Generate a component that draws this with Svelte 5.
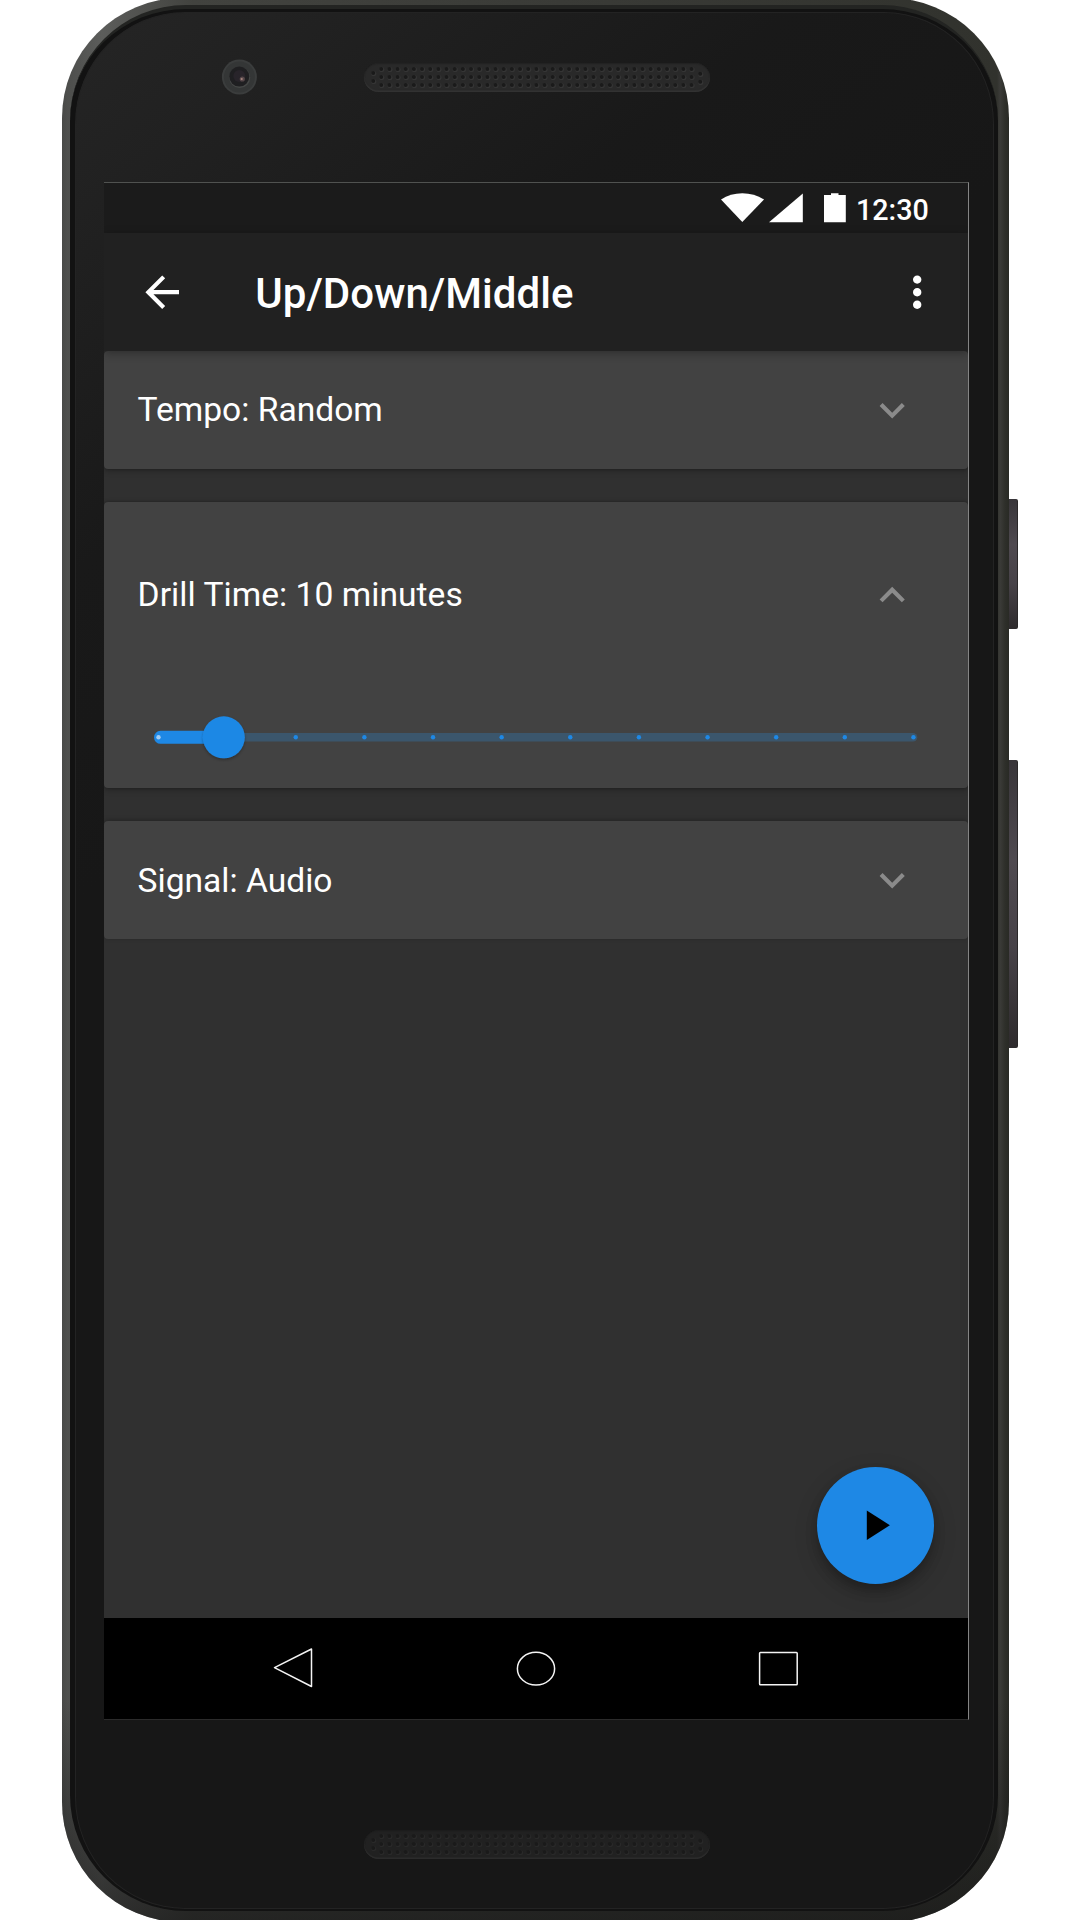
<script>
  const cards = [
    { label: 'Tempo: Random', open: false },
    { label: 'Drill Time: 10 minutes', open: true },
    { label: 'Signal: Audio', open: false }
  ];
  const ticks = Array.from({ length: 12 }, (_, i) => i);
  const holes = [];
  for (let c = 0; c < 39; c++) {
    for (let r = 0; r < 3; r++) holes.push([17.2 + c * 8.166, 5.9 + r * 8]);
  }
  holes.push([9.2, 9.9], [9.2, 17.9], [336.2, 10.8], [336.2, 18.8]);
</script>

{#snippet speaker(kind)}
  <div class="speaker {kind}">
    <svg width="346" height="29" viewBox="0 0 346 29">
      {#each holes as [x, y]}
        <circle class="rim" cx={x + 0.5} cy={y + 0.6} r="2.600" />
        <circle class="hole" cx={x} cy={y} r="2" />
      {/each}
    </svg>
  </div>
{/snippet}

<div class="stage">
  <div class="phone">
    <div class="metal"></div>
    <div class="rim-dark"></div>
    <div class="glass"></div>

    <div class="bezel top">
      <svg class="camera" width="36" height="36" viewBox="0 0 36 36">
        <circle cx="18.400" cy="18" r="17.500" fill="#3b3d3d" />
        <circle cx="18.400" cy="18" r="15.500" fill="#343636" />
        <circle cx="18.700" cy="18.500" r="10.500" fill="#464847" />
        <circle cx="18.300" cy="17.600" r="10" fill="#1f1f21" />
        <circle cx="18.300" cy="17" r="6" fill="#28242a" />
        <circle cx="21.300" cy="20" r="2.600" fill="#57484a" />
        <circle cx="20.700" cy="20" r="1.100" fill="#a98780" />
      </svg>
      {@render speaker('ear')}
    </div>

    <div class="screen">
      <div class="status">
        <svg width="126" height="31" viewBox="720 192 126 31" fill="#fff">
          <path d="M742.300 222 721 199.500Q730.500 193.200 742.300 193.200T764 199.500Z" />
          <path d="M769 222.300 802.800 193.500V222.300Z" />
          <path d="M824 195H831V193.200H838.500V195H845.800V222.300H824Z" />
        </svg>
        <span class="clock">12:30</span>
      </div>

      <header class="appbar">
        <svg class="icon" viewBox="0 0 24 24"><path d="M20 11H7.830l5.590-5.590L12 4l-8 8 8 8 1.410-1.410L7.830 13H20v-2z" /></svg>
        <h1>Up/Down/Middle</h1>
        <svg class="icon" viewBox="0 0 24 24"><path d="M12 8c1.100 0 2-.9 2-2s-.9-2-2-2-2 .9-2 2 .9 2 2 2zm0 2c-1.100 0-2 .9-2 2s.9 2 2 2 2-.9 2-2-.9-2-2-2zm0 6c-1.100 0-2 .9-2 2s.9 2 2 2 2-.9 2-2-.9-2-2-2z" /></svg>
      </header>

      <main>
        {#each cards as card}
          <section class="card" class:open={card.open}>
            <div class="head">
              <span>{card.label}</span>
              <svg class="icon" viewBox="0 0 24 24">
                {#if card.open}
                  <path d="M12 8l-6 6 1.410 1.410L12 10.830l4.590 4.580L18 14z" />
                {:else}
                  <path d="M16.590 8.590L12 13.170 7.410 8.590 6 10l6 6 6-6z" />
                {/if}
              </svg>
            </div>
            {#if card.open}
              <svg class="slider" width="764" height="50" viewBox="0 0 764 50">
                <defs>
                  <filter id="knob" x="-30%" y="-30%" width="160%" height="160%">
                    <feDropShadow dx="0" dy="1.500" stdDeviation="1.500" flood-color="#000" flood-opacity=".3" />
                  </filter>
                </defs>
                <rect x="2" y="21" width="761.300" height="8.600" rx="4.300" fill="#3b566c" />
                <rect x="0" y="18.800" width="70" height="13" rx="6.500" fill="#1e88e5" />
                {#each ticks as i}
                  <circle cx={4.5 + i * 68.63} cy="25.300" r="2.200" fill={i === 0 ? '#a3cdf3' : '#1e88e5'} />
                {/each}
                <circle cx="69.800" cy="25.300" r="21" fill="#1e88e5" filter="url(#knob)" />
              </svg>
            {/if}
          </section>
        {/each}
        <button class="fab" aria-label="Start">
          <svg class="icon" viewBox="0 0 24 24"><path d="M8 5v14l11-7z" /></svg>
        </button>
      </main>

      <nav>
        <svg width="40" height="42" viewBox="0 0 40 42"><path d="M1.500 20.700 38.500 2V39.500Z" /></svg>
        <svg width="40" height="42" viewBox="0 0 40 42"><ellipse cx="20" cy="21.700" rx="18.600" ry="16.400" /></svg>
        <svg width="40" height="42" viewBox="0 0 40 42"><rect x="1.600" y="5.500" width="37.600" height="32.300" rx=".8" /></svg>
      </nav>
    </div>

    <div class="bezel bottom">
      {@render speaker('mouth')}
    </div>
  </div>
  <div class="keys">
    <div class="key power"></div>
    <div class="key volume"></div>
  </div>
</div>

<style>
  :global(body) { background: #fff; overflow: hidden; }
  .stage {
    width: 1080px; height: 1920px; padding-left: 62px; box-sizing: border-box;
    display: flex; overflow: hidden; font-family: Roboto, sans-serif;
  }
  .phone {
    position: relative; width: 947px; height: 1920px; flex: none;
    display: flex; flex-direction: column; align-items: flex-start;
  }
  .metal, .rim-dark, .glass { position: absolute; }
  .metal {
    inset: -2px 0; border-radius: 120px;
    background: linear-gradient(90deg, #484947 0, #4d4e4c 5px, #5c5d5b 40px, #42433f 130px, #3a3b37 500px, #31322d 935px, #3b3b38 938px, #2e2f2a 943px, #292a25 947px);
  }
  .metal::after {
    content: ''; position: absolute; inset: 1702px 0 0; border-radius: 0 0 120px 120px;
    background: linear-gradient(180deg, transparent, rgba(20, 20, 20, .65));
  }
  .rim-dark { inset: 5px 11px 9px 7.500px; border-radius: 116px; background: #121212; border-top: 4px solid #232422; box-sizing: border-box; }
  .glass {
    inset: 11.500px 15px 11px 13px; border-radius: 110px / 112px;
    border: 1.500px solid #232323; box-sizing: border-box;
    background: linear-gradient(142deg, #252525 0, #212121 160px, #191919 440px, #171717 700px, #171717 100%);
  }
  .bezel { position: relative; width: 100%; flex: none; box-sizing: border-box; }
  .bezel.top { height: 182px; display: flex; align-items: flex-start; padding: 58.700px 0 0 159px; }
  .bezel.bottom { height: 200px; padding: 110px 0 0 302px; }
  .camera { display: block; flex: none; }
  .speaker { width: 346px; height: 29px; border-radius: 15px; flex: none; }
  .speaker svg { display: block; }
  .ear { margin: 4px 0 0 107px; background: #292929; box-shadow: inset 0 -1.500px 1px #333, inset 0 1px 1px #222; }
  .mouth { background: #212121; box-shadow: inset 0 -1.500px 1px #2d2d2d, inset 0 1px 1px #1c1c1c; }
  .rim { fill: #353535; }
  .hole { fill: #1a1a1a; }
  .mouth .rim { fill: #292929; }
  .mouth .hole { fill: #1a1a1a; }

  .screen {
    position: relative; margin-left: 42px; width: 865px; height: 1538px; flex: none; box-sizing: border-box;
    border-top: 1px solid #505250; border-right: 1px solid #858585; border-bottom: 1px solid #2b2b2b;
    display: flex; flex-direction: column; overflow: hidden; background: #303030; color: #fff;
  }
  .icon { width: 50.400px; height: 50.400px; flex: none; display: block; fill: currentColor; }
  .status { height: 49.700px; flex: none; background: #1b1b1b; display: flex; justify-content: flex-end; padding-right: 39px; box-sizing: border-box; }
  .status svg { margin: 9px 10px 0 0; flex: none; }
  .clock { font-size: 28.700px; font-weight: 500; line-height: 34px; padding-top: 9.500px; width: 73px; white-space: nowrap; }
  .appbar {
    position: relative; z-index: 2; height: 118.300px; flex: none; box-sizing: border-box; background: #212121;
    display: flex; align-items: center; padding: 0 25.400px 0 33.400px;
    box-shadow: 0 2px 9px rgba(0, 0, 0, .32);
  }
  h1 { margin: 0 0 0 67.500px; flex: 1; font-size: 42px; letter-spacing: .04px; line-height: 50px; font-weight: 500; white-space: nowrap; padding-top: 4px; }
  main { position: relative; flex: 1; display: flex; flex-direction: column; gap: 33.600px; }
  .card {
    height: 117.600px; flex: none; box-sizing: border-box; background: #424242; border-radius: 4px;
    box-shadow: 0 2px 6px rgba(0, 0, 0, .24), 0 0 3px rgba(0, 0, 0, .26);
  }
  .card:nth-of-type(3) { box-shadow: 0 -1px 5px rgba(0, 0, 0, .26); }
  .head { height: 100%; display: flex; align-items: center; justify-content: space-between; padding: 0 50.200px 0 33.600px; font-size: 33.600px; line-height: 40px; }
  .card:nth-of-type(3) span { padding-top: 1px; }
  .head .icon { color: #8b8b8b; }
  .card.open { height: 285.600px; }
  .open .head { height: 185.200px; letter-spacing: .04px; }
  .slider { display: block; margin: 25.100px 0 0 50px; }
  .fab {
    position: absolute; right: 34px; bottom: 34px; width: 117px; height: 117px;
    border: 0; padding: 0; border-radius: 50%; background: #1e88e5; color: #000;
    display: grid; place-items: center;
    box-shadow: 0 7px 12px rgba(0, 0, 0, .22), 0 8px 24px rgba(0, 0, 0, .16);
  }
  nav {
    height: 101px; flex: none; background: #000; display: flex; gap: 202.500px; box-sizing: border-box;
    padding: 28.500px 0 0 169px;
  }
  nav svg { flex: none; fill: none; stroke: #f4f4f4; stroke-width: 1.500; stroke-linejoin: round; }
  .keys { width: 9px; flex: none; padding-top: 499px; display: flex; flex-direction: column; gap: 131px; }
  .key { border-radius: 0 2px 2px 0; border-right: 1px solid #2a2829; box-sizing: border-box; background: linear-gradient(180deg, #383539, #4f4a50 35%, #474248 65%, #2e2b2d); }
  .power { height: 129.500px; }
  .volume { height: 288px; }
</style>
